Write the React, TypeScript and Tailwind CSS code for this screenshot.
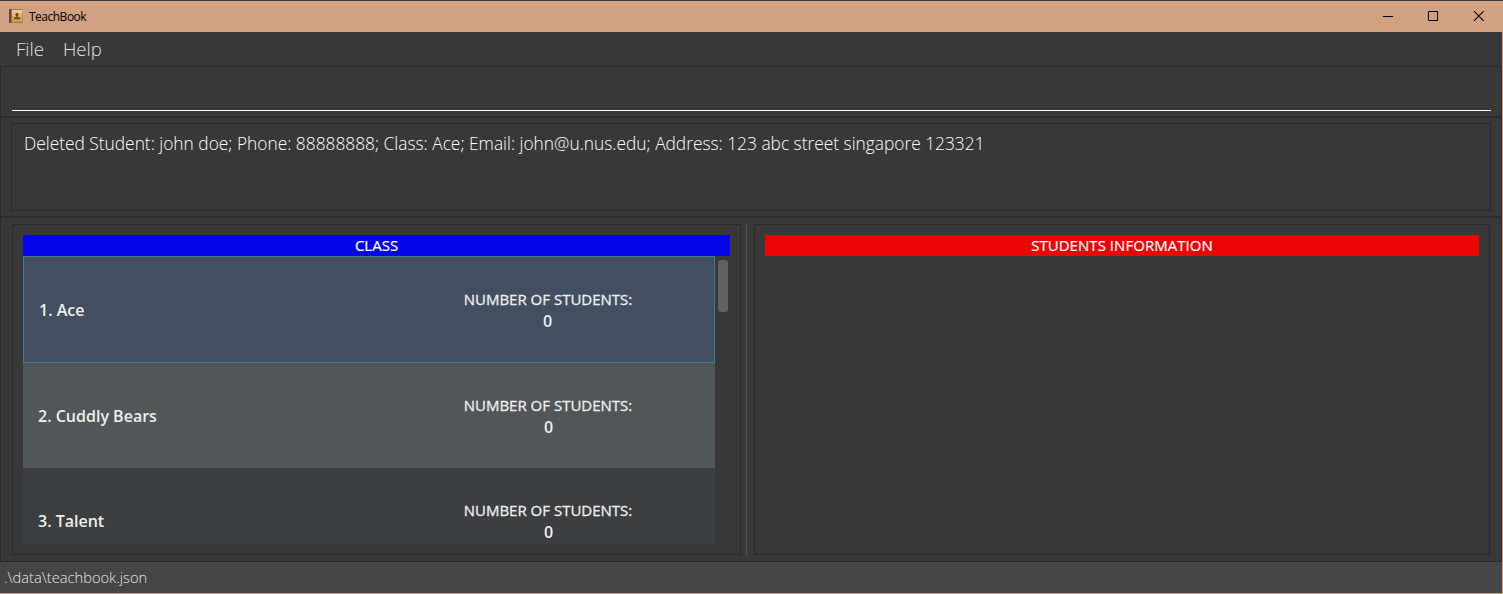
const classes = [
  { id: 1, name: 'Ace', students: 0, row: 'h-[107px] bg-[#434e60] border border-[#3e7b91]', nameBox: 'pl-[15px] pt-[42px]', countBox: 'pr-[2px] pt-[31px]', count: 'pr-[1px]' },
  { id: 2, name: 'Cuddly Bears', students: 0, row: 'h-[105px] bg-[#515658]', nameBox: 'pl-[15px] pt-[42px]', countBox: 'pt-[31px]', count: 'pl-[1px]' },
  { id: 3, name: 'Talent', students: 0, row: 'h-[76px] bg-[#3c3e3f]', nameBox: 'pl-[15px] pt-[42px]', countBox: 'pt-[31px]', count: 'pl-[1px]' },
];

function AppIcon() {
  return (
    <svg width="15" height="15" viewBox="0 0 15 15">
      <defs>
        <linearGradient id="cover" x1="0" y1="0" x2="0" y2="1">
          <stop offset="0" stopColor="#ecd09a" />
          <stop offset="1" stopColor="#cf973d" />
        </linearGradient>
      </defs>
      <rect x="0" y="0" width="14" height="14" rx="1" fill="#a9793f" />
      <rect x="0" y="0" width="2.2" height="14" rx="1" fill="#5c4a3c" />
      <rect x="3" y="1" width="10.5" height="12" fill="url(#cover)" />
      <path d="M8 4c1 0 1.600.7 1.600 1.600 0 .8-.5 1.400-.7 1.700v1h2.400v2H4.900v-2h2.300v-1c-.4-.4-.8-.9-.8-1.700C6.400 4.700 7 4 8 4z" fill="#6a4d26" />
    </svg>
  );
}

function TitleBar() {
  return (
    <header className="flex h-8 shrink-0 items-center border-t border-[#3b3a40] bg-[#d2a181] pl-[9px] text-black">
      <AppIcon />
      <span className="ml-[5px] font-['Open_Sans'] text-[12px] leading-4 tracking-[-0.5px]">TeachBook</span>
      <div className="ml-auto flex items-center pr-[18px]">
        <svg width="102" height="11" viewBox="0 0 102 11" fill="none" stroke="#000">
          <path d="M0 5.500h10" />
          <path d="M45.500.5h9v9h-9z" />
          <path d="M91 .2l9.600 9.600M100.600.2l-9.600 9.600" strokeWidth="1.100" />
        </svg>
      </div>
    </header>
  );
}

export default function App() {
  return (
    <div className="flex h-[594px] w-[1503px] flex-col overflow-hidden bg-[#383838] font-['Open_Sans',sans-serif]">
      <TitleBar />
      <div className="flex min-h-0 flex-1 flex-col border-r border-b border-[#d2a181]">
        <nav className="flex h-[34px] shrink-0 gap-[19px] pl-4 text-[18.600px] leading-[34px] font-light text-[#e0e0e0]">
          <span>File</span>
          <span>Help</span>
        </nav>
        <section className="h-[51px] shrink-0 border border-[#2b2b2b] pr-[10px] pl-[11px]">
          <div className="h-[44px] border-b border-white" />
        </section>
        <section className="h-[100px] shrink-0 border border-[#2b2b2b] px-[10px] pt-[5px]">
          <div className="h-[88px] border border-[#2b2b2b] pt-[7px] pl-[12px] text-[17.340px] leading-[24px] font-light whitespace-nowrap text-white">
            Deleted Student: john doe; Phone: 88888888; Class: Ace; Email: john@u.nus.edu; Address: 123 abc street singapore 123321
          </div>
        </section>
        <main className="flex h-[345px] shrink-0 border border-[#2b2b2b] pt-[6px] pl-[11px]">
          <section className="h-[331px] w-[729px] border border-[#2b2b2b] px-[10px] pt-[10px]">
            <h2 className="h-[21px] bg-[#0505ea] text-center text-[15px] leading-[21px] text-white [-webkit-text-stroke:0.2px_#ffffff]">CLASS</h2>
            <div className="flex">
              <ul className="h-[288px] w-[692px] overflow-hidden text-[#eeeeee]">
                {classes.map((c) => (
                  <li key={c.id} className={`flex ${c.row}`}>
                    <div className={`w-[395px] text-[16px] leading-[22px] font-semibold ${c.nameBox}`}>
                      {c.id}. {c.name}
                    </div>
                    <div className={`w-[260px] text-center ${c.countBox}`}>
                      <div className="text-[15px] leading-[22px] [-webkit-text-stroke:0.3px_#eeeeee]">NUMBER OF STUDENTS:</div>
                      <div className={`pt-px text-[16px] leading-[21px] font-semibold ${c.count}`}>{c.students}</div>
                    </div>
                  </li>
                ))}
              </ul>
              <div className="mt-1 ml-[3px] h-[52px] w-[10px] rounded-[3px] bg-[#606060]" />
            </div>
          </section>
          <div className="mr-[7px] ml-[5px] h-[331px] w-px bg-[#505050]" />
          <section className="h-[331px] w-[736px] border border-[#2b2b2b] px-[10px] pt-[10px]">
            <h2 className="h-[21px] bg-[#ec0505] text-center text-[15px] leading-[21px] tracking-[0.040px] text-white [-webkit-text-stroke:0.2px_#ffffff]">STUDENTS INFORMATION</h2>
          </section>
        </main>
        <footer className="h-[31px] bg-[#454545] pl-1 text-[14.700px] leading-[31px] font-light text-[#e4e4e4]">.\data\teachbook.json</footer>
      </div>
    </div>
  );
}
